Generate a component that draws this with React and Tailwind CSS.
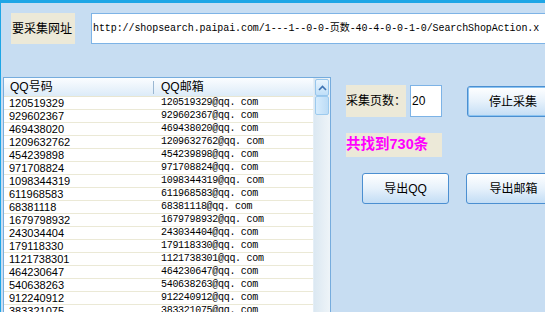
import React from "react";

const rows = [
  "120519329",
  "929602367",
  "469438020",
  "1209632762",
  "454239898",
  "971708824",
  "1098344319",
  "611968583",
  "68381118",
  "1679798932",
  "243034404",
  "179118330",
  "1121738301",
  "464230647",
  "540638263",
  "912240912",
  "383321075",
];

const cjk = { fontFamily: '"Liberation Sans", "Noto Sans CJK SC", sans-serif' };
const mono = { fontFamily: '"Liberation Mono", "Noto Sans CJK SC", monospace' };

function Btn({ children, className = "", focused = false }) {
  return (
    <div
      className={
        "h-[31px] rounded-[3px] border border-[#4b8fd1] bg-gradient-to-b from-[#ffffff] via-[#e6f1fb] to-[#c3ddf5] flex items-center justify-center text-[12px] text-black shrink-0 " +
        (focused ? "shadow-[inset_0_0_0_1px_#8cc4f2] " : "") +
        className
      }
      style={cjk}
    >
      {children}
    </div>
  );
}

export default function App() {
  return (
    <div className="w-[545px] h-[312px] overflow-hidden bg-[#c7ddf2] border-t-[3px] border-l border-[#1ea6e6]">
      {/* URL row */}
      <div className="flex mt-[10px] ml-[10px]">
        <div
          className="w-[64px] h-[31px] bg-[#ece9d8] flex items-center pl-[1px] text-[12px] text-black shrink-0"
          style={cjk}
        >
          要采集网址
        </div>
        <div className="ml-[16px] w-[480px] h-[31px] bg-white border border-[#7db3e6] flex items-center pl-[1px] overflow-hidden shrink-0">
          <span
            className="text-[10px] tracking-[-0.08px] whitespace-nowrap text-black"
            style={mono}
          >
            http://shopsearch.paipai.com/1---1--0-0-页数-40-4-0-0-1-0/SearchShopAction.x
          </span>
        </div>
      </div>

      {/* main area */}
      <div className="flex mt-[33px]">
        {/* list */}
        <div className="ml-[2px] w-[328px] h-[240px] border border-[#76acdd] bg-white flex shrink-0 overflow-hidden">
          <div className="flex-1 flex flex-col">
            <div className="h-[19px] flex items-center bg-gradient-to-b from-[#fbfdff] to-[#dcebf8] border-b border-[#e8e6d2] text-[12px] text-black shrink-0" style={cjk}>
              <div className="w-[149px] pl-[6px]">QQ号码</div>
              <div className="w-px h-[13px] bg-[#9ab7d2]"></div>
              <div className="pl-[7px]">QQ邮箱</div>
            </div>
            {rows.map((r) => (
              <div key={r} className="h-[13px] flex items-center border-b border-[#ebe9d6] shrink-0">
                <div
                  className="w-[157px] pl-[5px] text-[11px] leading-[12px] text-black"
                  style={{ fontFamily: '"Liberation Sans", sans-serif' }}
                >
                  {r}
                </div>
                <div className="text-[10px] leading-[12px] tracking-[-0.3px] text-black" style={mono}>
                  {r}@qq. com
                </div>
              </div>
            ))}
          </div>
          {/* scrollbar */}
          <div className="w-[17px] h-full bg-gradient-to-r from-[#dbe8f2] to-[#eef4f8] flex flex-col shrink-0 border-l border-[#e4eef6]">
            <div className="h-[17px] mx-[1px] mt-[1px] rounded-[2px] border border-[#97c6ec] bg-gradient-to-b from-[#e8f4fe] to-[#bfdff8] flex items-center justify-center">
              <svg width="9" height="6" viewBox="0 0 9 6">
                <path d="M1 5 L4.5 1.5 L8 5" stroke="#3f73b3" strokeWidth="1.6" fill="none" />
              </svg>
            </div>
            <div className="h-[19px] mx-[1px] rounded-[2px] border border-[#9ccaee] bg-gradient-to-r from-[#d6ecfd] to-[#bcdcf6]"></div>
          </div>
        </div>

        {/* right controls */}
        <div className="ml-[15px] flex flex-col">
          <div className="flex mt-[8px]">
            <div
              className="w-[60px] h-[32px] bg-[#ece9d8] flex items-center text-[12px] text-black shrink-0"
              style={cjk}
            >
              采集页数：
            </div>
            <div className="ml-[4px] w-[32px] h-[32px] bg-white border border-[#7db3e6] flex items-center pl-[1px] shrink-0">
              <span className="text-[12px] text-black" style={{ fontFamily: '"Liberation Sans", sans-serif' }}>20</span>
            </div>
            <Btn className="ml-[25px] mt-[1px] w-[92px]" focused>
              停止采集
            </Btn>
          </div>
          <div
            className="mt-[16px] w-[96px] h-[24px] bg-[#ece9d8] flex items-center text-[14.5px] font-bold text-[#ff00ff]"
            style={cjk}
          >
            共找到730条
          </div>
          <div className="flex mt-[16px]">
            <Btn className="ml-[16px] w-[87px]">导出QQ</Btn>
            <Btn className="ml-[17px] w-[95px]">导出邮箱</Btn>
          </div>
        </div>
      </div>
    </div>
  );
}
